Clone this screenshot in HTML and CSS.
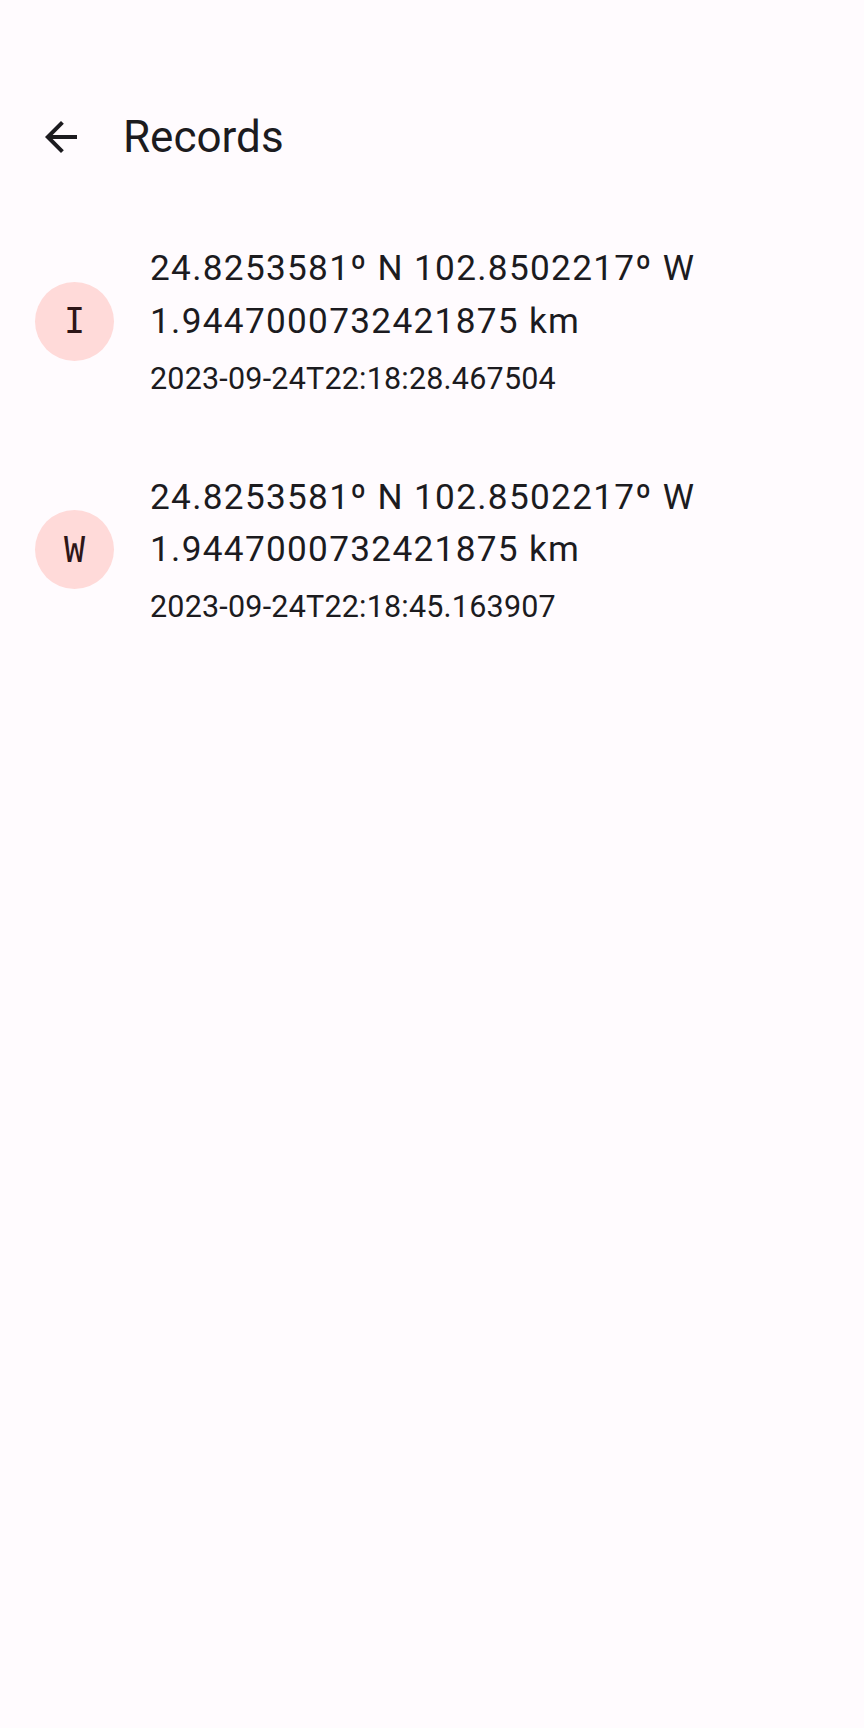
FILE: index.html
```html
<!DOCTYPE html>
<html>
<head>
<meta charset="utf-8">
<link rel="stylesheet" href="styles.css">
</head>
<body>
<header class="topbar">
  <div class="nav-icon">
    <svg width="48" height="48" viewBox="0 0 24 24"><path d="M20 11H7.83l5.59-5.59L12 4l-8 8 8 8 1.41-1.41L7.83 13H20v-2z" fill="#1c1b1f"/></svg>
  </div>
  <h1 class="title">Records</h1>
</header>
<ul class="list">
  <li class="item">
    <div class="avatar">I</div>
    <div class="texts">
      <div class="headline">24.8253581º N 102.8502217º W</div>
      <div class="headline">1.9447000732421875 km</div>
      <div class="support">2023-09-24T22:18:28.467504</div>
    </div>
  </li>
  <li class="item">
    <div class="avatar">W</div>
    <div class="texts">
      <div class="headline">24.8253581º N 102.8502217º W</div>
      <div class="headline">1.9447000732421875 km</div>
      <div class="support">2023-09-24T22:18:45.163907</div>
    </div>
  </li>
</ul>
</body>
</html>
```
FILE: styles.css
```css
html, body {
  margin: 0;
  background: #fffbfe;
}
body {
  padding-top: 102px;
  font-family: Roboto, "Noto Sans", sans-serif;
  color: #1c1b1f;
}
.topbar {
  height: 70px;
  display: flex;
  align-items: center;
}
.nav-icon {
  width: 48px;
  height: 48px;
  margin-left: 37px;
  display: flex;
}
.title {
  margin: 0 0 0 38px;
  font-size: 44px;
  font-weight: 400;
  line-height: 56px;
}
.list {
  list-style: none;
  margin: 0;
  padding: 35px 0 0 0;
}
.item {
  display: flex;
  align-items: center;
  padding: 35px 0 35px 35px;
}
.avatar {
  width: 79px;
  height: 79px;
  border-radius: 50%;
  background: #ffdad9;
  color: #2d1517;
  font-family: "DejaVu Sans Mono", monospace;
  font-size: 35px;
  display: flex;
  align-items: center;
  justify-content: center;
  flex-shrink: 0;
}
.texts {
  margin-left: 36px;
}
.headline {
  font-size: 35.2px;
  line-height: 52.8px;
  letter-spacing: 1.3px;
}
.support {
  margin-top: 9px;
  font-size: 30.5px;
  line-height: 44px;
  letter-spacing: 0.2px;
}
```
